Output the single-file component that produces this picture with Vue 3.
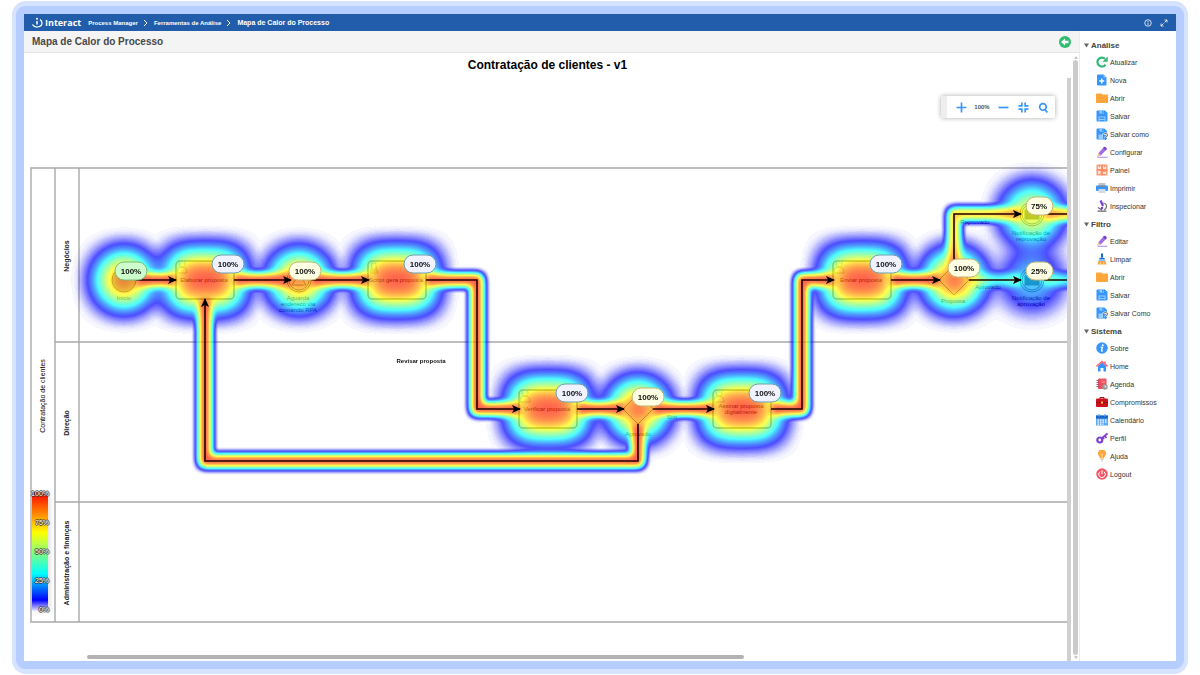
<script setup>
const sections = [
  { title: 'Análise', items: [
    ['refresh', 'Atualizar'], ['new', 'Nova'], ['folder', 'Abrir'], ['save', 'Salvar'],
    ['saveas', 'Salvar como'], ['pencil', 'Configurar'], ['panel', 'Painel'],
    ['print', 'Imprimir'], ['inspect', 'Inspecionar']
  ] },
  { title: 'Filtro', items: [
    ['pencil', 'Editar'], ['brush', 'Limpar'], ['folder', 'Abrir'], ['save', 'Salvar'], ['saveas', 'Salvar Como']
  ] },
  { title: 'Sistema', items: [
    ['info', 'Sobre'], ['home', 'Home'], ['agenda', 'Agenda'], ['case', 'Compromissos'],
    ['calendar', 'Calendário'], ['key', 'Perfil'], ['bulb', 'Ajuda'], ['power', 'Logout']
  ] }
]

const tasks = [
  { x: 205, y: 280, label: ['Elaborar proposta'], icon: 'user' },
  { x: 397, y: 280, label: ['Script gera proposta'], icon: 'script' },
  { x: 548, y: 409, label: ['Verificar proposta'], icon: 'user' },
  { x: 742, y: 409, label: ['Assinar proposta', 'digitalmente'], icon: 'user' },
  { x: 862, y: 280, label: ['Enviar proposta'], icon: 'user' }
]

const gateways = [{ x: 638, y: 409 }, { x: 954, y: 280 }]

const events = [{ x: 299, y: 280 }, { x: 1032, y: 214 }, { x: 1032, y: 280 }]

const links = [
  { d: 'M136 280H176', heat: 1 },
  { d: 'M234 280H291', heat: 1 },
  { d: 'M311 280H369', heat: 1 },
  { d: 'M426 280H477V409H520', heat: 1 },
  { d: 'M577 409H624', heat: 1 },
  { d: 'M653 409H714', heat: 1 },
  { d: 'M771 409H802V280H834', heat: 1 },
  { d: 'M891 280H940', heat: 1 },
  { d: 'M638 424V461H205V299', heat: 1 },
  { d: 'M954 266V214H1021', heat: 0.76 },
  { d: 'M1044 214H1110', heat: 0.76 },
  { d: 'M969 280H1021', heat: 0.3 },
  { d: 'M1044 280H1110', heat: 0.3 }
]

const rounds = [
  { x: 124, y: 280, heat: 0.94 }, { x: 299, y: 280, heat: 0.94 },
  { x: 638, y: 409, heat: 1 }, { x: 954, y: 280, heat: 1 },
  { x: 1032, y: 214, heat: 0.72 }, { x: 1032, y: 280, heat: 0.3 }
]

const captions = [
  { x: 124, y: 300, lines: ['Início'] },
  { x: 298, y: 300, lines: ['Aguarda', 'endereco via', 'comando RPA'] },
  { x: 638, y: 436, lines: ['Aprovado'] },
  { x: 672, y: 419, lines: ['Sim'] },
  { x: 953, y: 303, lines: ['Proposta'] },
  { x: 988, y: 289, lines: ['Aprovado'] },
  { x: 975, y: 224, lines: ['Reprovado'] },
  { x: 1031, y: 235, lines: ['Notificação de', 'reprovação'] },
  { x: 1031, y: 300, lines: ['Notificação de', 'aprovação'] }
]

const badges = [
  { x: 131, y: 271, v: 100, kind: 'start' },
  { x: 228, y: 264, v: 100, kind: 'task' },
  { x: 305, y: 271, v: 100, kind: 'event' },
  { x: 420, y: 264, v: 100, kind: 'task' },
  { x: 572, y: 393, v: 100, kind: 'task' },
  { x: 648, y: 397, v: 100, kind: 'event' },
  { x: 765, y: 393, v: 100, kind: 'task' },
  { x: 886, y: 264, v: 100, kind: 'task' },
  { x: 964, y: 268, v: 100, kind: 'event' },
  { x: 1039, y: 206, v: 75, kind: 'event' },
  { x: 1039, y: 271, v: 25, kind: 'event' }
]
</script>

<template>
  <div class="page">
    <svg class="sprite" aria-hidden="true">
      <symbol id="refresh" viewBox="0 0 24 24"><path d="M19 17.5A9 9 0 1 1 18 5.5" fill="none" stroke="#2fb973" stroke-width="4.4" /><path d="M23.500 1v10.500H13z" fill="#2fb973" /></symbol>
      <symbol id="new" viewBox="0 0 24 24"><path d="M4 1h11l6 6v14a2 2 0 0 1-2 2H4a2 2 0 0 1-2-2V3a2 2 0 0 1 2-2z" fill="#3696fb" /><path d="M15 1v6h6z" fill="#8cc4ff" /><path d="M11.500 9v10M6.500 14h10" stroke="#fff" stroke-width="2.800" /></symbol>
      <symbol id="folder" viewBox="0 0 24 24"><path d="M0 5a2 2 0 0 1 2-2h9l2 2h9a2 2 0 0 1 2 2v13a2 2 0 0 1-2 2H2a2 2 0 0 1-2-2z" fill="#ffa63b" /><path d="M12 7l2-2h9v1H14z" fill="#ffd19a" /></symbol>
      <symbol id="save" viewBox="0 0 24 24"><path d="M1 3a2 2 0 0 1 2-2h15l5 5v15a2 2 0 0 1-2 2H3a2 2 0 0 1-2-2z" fill="#3696fb" /><path d="M7 2h9v5H7zM5 13h14v10H5z" fill="#9accff" /><path d="M12 2h3v4h-3zM7 15h10v3H7zM7 20h10v2H7z" fill="#3696fb" /></symbol>
      <symbol id="saveas" viewBox="0 0 24 24"><path d="M1 3a2 2 0 0 1 2-2h14l5 5v15a2 2 0 0 1-2 2H3a2 2 0 0 1-2-2z" fill="#3696fb" /><path d="M7 2h8v5H7zM5 13h9v10H5z" fill="#9accff" /><path d="M12 2h3v4h-3z" fill="#3696fb" /><path d="M15 14q0-3 4-3t4 3q0 2-2 3t-2 3" fill="none" stroke="#fff" stroke-width="4.500" /><path d="M15 14q0-3 4-3t4 3q0 2-2 3t-2 3M19 21.500v2" fill="none" stroke="#777" stroke-width="2.200" /></symbol>
      <symbol id="pencil" viewBox="0 0 24 24"><path d="M3 21l2-7L15.500 2.500q1.500-1.500 3 0l2 2q1.500 1.500 0 3L9.500 19z" fill="#a36be8" /><path d="M14 4l5 5 2-2q1-1.500 0-3l-2-2q-1.500-1-3 0z" fill="#7c3fd0" /><path d="M3 21l2-7 4.500 5z" fill="#f2c9a0" /><path d="M3 22.500h20" stroke="#b184ee" stroke-width="2" /></symbol>
      <symbol id="panel" viewBox="0 0 24 24"><path d="M1 1h22v22H1z" fill="#ff9a76" /><path d="M4 4h6v6H4zM14 4h6v6h-6zM4 14h5v6H4zM14 16h6v4h-6z" fill="#ffe5dc" /><path d="M7 3v3M17 3v3M12 1v22M1 12h22" stroke="#ff8358" stroke-width="2" /></symbol>
      <symbol id="print" viewBox="0 0 24 24"><path d="M5 2h14v6H5z" fill="#c0c4ca" /><rect x="0" y="7" width="24" height="11" rx="2" fill="#3696fb" /><path d="M5 7h14v3H5z" fill="#7e8b9a" /><path d="M5 14h14v8H5z" fill="#d3dce6" /></symbol>
      <symbol id="inspect" viewBox="0 0 24 24"><path d="M7 2l4-2 5 11-4 2z" fill="#7c3fd0" /><path d="M14 6q8 1 7 8-1 4-5 6" fill="none" stroke="#777" stroke-width="2.500" /><path d="M4 15l8 5M3 22h18" stroke="#666" stroke-width="2.500" /><circle cx="12" cy="16" r="2.500" fill="#7c3fd0" /></symbol>
      <symbol id="brush" viewBox="0 0 24 24"><path d="M10 1h4v8h-4z" fill="#1769d8" /><path d="M6 13q0-4 6-4t6 4z" fill="#1769d8" /><path d="M5 13h14v3H5z" fill="#8cc4ff" /><path d="M5 16h14l2 7H3z" fill="#ffa63b" /><path d="M9 19l-1 4M15 19l1 4" stroke="#fff" stroke-width="1.300" /></symbol>
      <symbol id="info" viewBox="0 0 24 24"><circle cx="12" cy="12" r="11.500" fill="#3696fb" /><circle cx="13.500" cy="6.500" r="1.900" fill="#fff" /><path d="M9 10.500h4l-2 7.500h3" fill="none" stroke="#fff" stroke-width="2.400" /></symbol>
      <symbol id="home" viewBox="0 0 24 24"><path d="M4 12l8-8 8 8v11h-5v-7H9v7H4z" fill="#3696fb" /><path d="M1 13L12 3l11 10M18 3v6" fill="none" stroke="#ff6672" stroke-width="3.200" /></symbol>
      <symbol id="agenda" viewBox="0 0 24 24"><rect x="4" y="1" width="17" height="21" rx="2" fill="#ef4f5f" /><path d="M1 5h6M1 9h6M1 13h6M1 17h6" stroke="#99505a" stroke-width="1.800" /><path d="M11 6h7M11 9h7" stroke="#ff9da5" stroke-width="1.500" /><circle cx="18" cy="18" r="5.500" fill="#999" /><path d="M18 15v3h3" fill="none" stroke="#fff" stroke-width="1.500" /></symbol>
      <symbol id="case" viewBox="0 0 24 24"><path d="M8 6V3h8v3" fill="none" stroke="#8e121b" stroke-width="2" /><rect x="0" y="5" width="24" height="17" rx="2" fill="#cc111d" /><path d="M0 12h24v2H0z" fill="#8e121b" /><path d="M10 11h4v4h-4z" fill="#ffc04a" /></symbol>
      <symbol id="calendar" viewBox="0 0 24 24"><path d="M0 3h24v20H0z" fill="#5aa9fa" /><path d="M0 3h24v6H0z" fill="#1665c4" /><path d="M6 0v5M18 0v5" stroke="#58a7f5" stroke-width="2.500" /><path d="M3 12h18M3 16h18M3 20h12" stroke="#fff" stroke-width="2.500" stroke-dasharray="3 2" /></symbol>
      <symbol id="key" viewBox="0 0 24 24"><circle cx="7.500" cy="16" r="5" fill="none" stroke="#7c3fd0" stroke-width="4.400" /><path d="M11 13L23 3M17 7l4 5M13 10l3 4" stroke="#7c3fd0" stroke-width="3.600" /></symbol>
      <symbol id="bulb" viewBox="0 0 24 24"><path d="M8 17q0-3-2-5a8 8 0 1 1 12 0q-2 2-2 5z" fill="#ffa63b" /><path d="M12 17V9M10 7l2 3 2-3" fill="none" stroke="#ffe2b8" stroke-width="1.500" /><path d="M9 19h6M10 22h4" stroke="#ccc" stroke-width="2" /></symbol>
      <symbol id="power" viewBox="0 0 24 24"><circle cx="12" cy="12" r="11.500" fill="#f65767" /><path d="M8 7.500a6.500 6.500 0 1 0 8 0M12 4.500v8" fill="none" stroke="#fff" stroke-width="2" /></symbol>
    </svg>

    <div class="frame">
      <div class="window">
        <header class="topbar">
          <svg class="logo" viewBox="0 0 22 22" aria-hidden="true">
            <path d="M10 8v7" stroke="#fff" stroke-width="3" /><circle cx="10" cy="3.500" r="2" fill="#fff" />
            <path d="M1 15q4 5.500 10 5 9-1 9-8 0-4-4-7" fill="none" stroke="#fff" stroke-width="2.500" />
          </svg>
          <span class="brand">Interact</span>
          <nav class="crumbs" aria-label="Trilha">
            <a href="#">Process Manager</a>
            <svg viewBox="0 0 4 8" aria-hidden="true"><path d="M0 1l3 3-3 3" /></svg>
            <a href="#">Ferramentas de Análise</a>
            <svg viewBox="0 0 4 8" aria-hidden="true"><path d="M0 1l3 3-3 3" /></svg>
            <a href="#" class="current">Mapa de Calor do Processo</a>
          </nav>
          <button class="top-btn" aria-label="Informações">
            <svg viewBox="0 0 16 16"><circle cx="8" cy="8" r="6.500" /><path d="M8 7v5M8 4v2" /></svg>
          </button>
          <button class="top-btn" aria-label="Tela cheia">
            <svg viewBox="0 0 16 16"><path d="M9 2h5v5M14 2L9 7M7 14H2V9M2 14l5-5" /></svg>
          </button>
        </header>

        <div class="body">
          <main class="main">
            <div class="titlebar">
              <h1>Mapa de Calor do Processo</h1>
              <button aria-label="Voltar">
                <svg viewBox="0 0 24 24"><circle cx="12" cy="12" r="12" fill="#2fbd70" /><path d="M4 12l8-7v4.500h7v5h-7v4.500z" fill="#fff" /></svg>
              </button>
            </div>
            <div class="workspace">
              <section class="stage">
                <h2>Contratação de clientes - v1</h2>
                <div class="scroll-row">
                  <div class="canvas">
                    <svg class="diagram" width="1400" height="583" viewBox="24 78 1400 583" role="img" aria-label="Mapa de calor do processo">
                      <defs>
                        <filter id="soft" filterUnits="userSpaceOnUse" x="24" y="78" width="1200" height="583"><feGaussianBlur stdDeviation="12" /></filter>
                        <filter id="crisp" filterUnits="userSpaceOnUse" x="24" y="78" width="1200" height="583"><feGaussianBlur stdDeviation="3" /></filter>
                        <filter id="heat" filterUnits="userSpaceOnUse" x="24" y="78" width="1200" height="583" color-interpolation-filters="sRGB">
                          <feColorMatrix in="SourceGraphic" type="matrix" values="0 0 0 1 0  0 0 0 1 0  0 0 0 1 0  0 0 0 0 1" result="level" />
                          <feComponentTransfer in="level" result="ramp">
                            <feFuncR type="table" tableValues="0 0 0 0 .33 .67 1 1 1 1" />
                            <feFuncG type="table" tableValues="0 0 .5 1 1 1 1 .67 .36 .08" />
                            <feFuncB type="table" tableValues="1 1 1 1 .67 .33 0 0 0 0" />
                          </feComponentTransfer>
                          <feComponentTransfer in="SourceGraphic" result="cover">
                            <feFuncA type="table" tableValues="0 .38 .64 .84 1 1 1 1 1 1 1 1 1 1 1 1 1 1 1 1 1 1 1 1 1 1 1 1 1 1 1 1 1 1 1 1 1" />
                          </feComponentTransfer>
                          <feComposite in="ramp" in2="cover" operator="in" />
                        </filter>
                        <marker id="tip" viewBox="0 0 9 8" refX="8" refY="4" markerWidth="9" markerHeight="8" markerUnits="userSpaceOnUse" orient="auto"><path d="M0 0l9 4-9 4 2-4z" /></marker>
                      </defs>

                      <g class="lanes">
                        <path d="M1400 168H31V622H1400M55 168V622M79 168V622M55 342H1400M55 502H1400" />
                      </g>
                      <g class="lane-names">
                        <text transform="translate(45 396) rotate(-90)">Contratação de clientes</text>
                        <text class="strong" transform="translate(69 256) rotate(-90)">Negócios</text>
                        <text class="strong" transform="translate(69 423) rotate(-90)">Direção</text>
                        <text class="strong" transform="translate(69 563) rotate(-90)">Administração e finanças</text>
                      </g>

                      <g class="nodes">
                        <g v-for="(t, i) in tasks" :key="i">
                          <rect :x="t.x - 29" :y="t.y - 19" width="58" height="38" rx="4" />
                          <g class="kind" :transform="`translate(${t.x - 23} ${t.y - 12})`">
                            <path v-if="t.icon === 'user'" d="M-5 5q0-6 5-6t5 6zM0-1a3 3 0 1 1 .1 0" />
                            <path v-else d="M-3-5h5v4l2 6h-8l2-6zM-2 1h5M-3 3h6" />
                          </g>
                          <text v-for="(l, j) in t.label" :key="j" :x="t.x - 1" :y="t.y + 2 + j * 6 - (t.label.length - 1) * 3">{{ l }}</text>
                        </g>
                        <path v-for="(g, i) in gateways" :key="'g' + i" :d="`M${g.x - 15} ${g.y}l15-15 15 15-15 15z`" />
                        <circle class="start-node" cx="124" cy="280" r="12" />
                        <g v-for="e in events" :key="e.x + '-' + e.y">
                          <circle :cx="e.x" :cy="e.y" r="12" />
                          <circle :cx="e.x" :cy="e.y" r="10" />
                        </g>
                        <path d="M292 285l7-11 7 11z" />
                        <path d="M1025 210h14v9h-14zl7 5 7-5M1025 276h14v9h-14zl7 5 7-5" class="mail" />
                        <template v-for="(c, i) in captions" :key="'c' + i">
                          <text v-for="(l, j) in c.lines" :key="j" :x="c.x" :y="c.y + j * 6">{{ l }}</text>
                        </template>
                      </g>

                      <g filter="url(#heat)" opacity="0.7">
                        <g filter="url(#soft)">
                          <rect v-for="(t, i) in tasks" :key="i" :x="t.x - 33" :y="t.y - 25" width="66" height="50" rx="8" />
                        </g>
                        <g filter="url(#soft)">
                          <circle v-for="(r, i) in rounds" :key="i" :cx="r.x" :cy="r.y" r="25" :opacity="r.heat" />
                        </g>
                        <g filter="url(#crisp)" class="trail">
                          <path v-for="(l, i) in links" :key="i" :d="l.d" :opacity="l.heat" />
                        </g>
                      </g>

                      <g class="arrows">
                        <path v-for="(l, i) in links" :key="i" :d="l.d" marker-end="url(#tip)" />
                      </g>
                      <text class="free" x="421" y="363">Revisar proposta</text>

                      <g v-for="(b, i) in badges" :key="'b' + i" class="badge" :class="b.kind">
                        <rect :x="b.x - (b.v === 100 ? 16 : 13)" :y="b.y - 9" :width="b.v === 100 ? 32 : 27" height="18" rx="9" />
                        <text :x="b.x" :y="b.y + 3">{{ b.v }}%</text>
                      </g>
                    </svg>

                    <div class="legend">
                      <span>100%</span><span>75%</span><span>50%</span><span>25%</span><span>0%</span>
                    </div>

                    <div class="zoombar">
                      <i class="grip"></i>
                      <button aria-label="Aumentar zoom"><svg viewBox="0 0 20 20"><path d="M10 1v18M1 10h18" /></svg></button>
                      <output>100%</output>
                      <button aria-label="Diminuir zoom"><svg viewBox="0 0 20 20"><path d="M1 10h18" /></svg></button>
                      <button aria-label="Ajustar"><svg viewBox="0 0 20 20"><path d="M7 1v6H1M13 1v6h6M7 19v-6H1M13 19v-6h6" /></svg></button>
                      <button aria-label="Pesquisar"><svg viewBox="0 0 20 20"><circle cx="9" cy="9" r="6" /><path d="M12 13l5 6" /></svg></button>
                    </div>
                    <div class="hscroll"></div>
                  </div>
                  <div class="vscroll-inner"></div>
                </div>
              </section>
              <div class="vscroll">
                <svg viewBox="0 0 6 4"><path d="M3 0l3 4H0z" /></svg>
                <i></i>
                <svg viewBox="0 0 6 4"><path d="M3 4L0 0h6z" /></svg>
              </div>
            </div>
          </main>

          <aside class="side">
            <section v-for="s in sections" :key="s.title">
              <h3><svg viewBox="0 0 6 5" aria-hidden="true"><path d="M0 0h6L3 5z" /></svg>{{ s.title }}</h3>
              <ul>
                <li v-for="[icon, label] in s.items" :key="label">
                  <a href="#"><svg aria-hidden="true"><use :href="'#' + icon" /></svg>{{ label }}</a>
                </li>
              </ul>
            </section>
          </aside>
        </div>
      </div>
    </div>
  </div>
</template>

<style>
body { margin: 0; background: #fff; }
</style>

<style scoped>
.page { height: 100vh; box-sizing: border-box; padding: 1px 12px; font-family: "Liberation Sans", Arial, sans-serif; color: #333; }
.sprite { position: absolute; width: 0; height: 0; }
.frame { height: 100%; box-sizing: border-box; padding: 5px 4px; border-radius: 14px; background: #d6e3ff; }
.window { height: 100%; box-sizing: border-box; border: 8px solid #b5cdff; border-radius: 9px; background: #fff; display: flex; flex-direction: column; }
button { border: 0; padding: 0; background: none; display: flex; cursor: pointer; }
a { color: inherit; text-decoration: none; }
h1, h2, h3, ul { margin: 0; padding: 0; }
ul { list-style: none; }

.topbar { flex: none; height: 17px; background: #215dab; color: #fff; display: flex; align-items: center; padding: 0 8px; }
.logo { width: 11px; height: 11px; margin-right: 2px; }
.brand { font: bold 9px "Open Sans", sans-serif; }
.crumbs { flex: 1; display: flex; align-items: center; gap: 6px; margin-left: 7px; font-size: 6px; font-weight: bold; white-space: nowrap; }
.crumbs svg { width: 4px; height: 8px; fill: none; stroke: #fff; }
.crumbs .current { font-size: 7px; }
.top-btn { margin-left: 8px; }
.top-btn svg { width: 8px; height: 8px; fill: none; stroke: #fff; stroke-width: 1.6; }

.body { flex: 1; min-height: 0; display: flex; }
.main { flex: 1; min-width: 0; display: flex; flex-direction: column; }
.titlebar { flex: none; height: 22px; box-sizing: border-box; border-bottom: 1px solid #e4e4e4; background: #f4f4f4; display: flex; align-items: center; justify-content: space-between; padding: 0 8px; }
.titlebar h1 { font-size: 10px; line-height: 12px; color: #484848; }
.titlebar svg { width: 12px; height: 12px; }
.workspace { flex: 1; min-height: 0; display: flex; }
.stage { flex: 1; min-width: 0; display: flex; flex-direction: column; }
.stage h2 { flex: none; font-size: 12px; line-height: 25px; text-align: center; color: #000; }
.scroll-row { flex: 1; min-height: 0; display: flex; }
.canvas { flex: 1; min-width: 0; position: relative; overflow: hidden; }
.diagram { display: block; }
.vscroll-inner { width: 4px; background: #d0d0d0; }
.vscroll { width: 7px; margin-left: 1px; display: flex; flex-direction: column; align-items: center; gap: 1px; padding: 3px 0 2px; box-sizing: border-box; }
.vscroll svg { width: 4px; height: 3px; fill: #bbb; }
.vscroll i { flex: 1; width: 5px; border-radius: 3px; background: #cbcbcb; }

.lanes path { fill: none; stroke: #a9a9a9; stroke-width: 1.4; }
.lane-names text { font-size: 7px; text-anchor: middle; fill: #000; }
.lane-names .strong { font-weight: bold; fill: #222; }
.nodes rect, .nodes circle, .nodes path { fill: none; stroke: #555; stroke-width: 1; }
.nodes rect { stroke-width: 1.4; }
.nodes .kind path { stroke: #999; }
.nodes .start-node { fill: #bbb; }
.nodes .mail { fill: #555; }
.nodes text { font-size: 6px; text-anchor: middle; fill: #000; }
.trail path { fill: none; stroke: #000; stroke-width: 12; stroke-linejoin: round; }
.arrows path { fill: none; stroke: #200; stroke-width: 1.6; }
marker path { fill: #000; }
.free { font-size: 6px; font-weight: bold; text-anchor: middle; fill: #111; }
.badge text { font-size: 8px; font-weight: bold; text-anchor: middle; fill: #111; }
.badge.start rect { fill: #ccffcc; stroke: #79b879; }
.badge.task rect { fill: #f0f2ff; stroke: #6a9fb5; }
.badge.event rect { fill: #ffffe3; stroke: #c4b473; }

.legend { position: absolute; left: 8px; bottom: 49px; width: 16px; height: 120px; border-radius: 3px; background: linear-gradient(to top, #fff, #00f 10%, #0ff 32%, #ff0 66%, #f00); box-shadow: 2px 0 5px #0002; display: flex; flex-direction: column; justify-content: space-between; font-size: 7px; line-height: 4px; text-align: right; color: #fff; text-shadow: 1px 0 #333, -1px 0 #333, 0 1px #333, 0 -1px #333; }
.legend span { margin-left: -4px; margin-right: -1px; }
.zoombar { position: absolute; top: 18px; right: 12px; height: 22px; display: flex; align-items: center; gap: 8px; padding-right: 6px; background: #fff; border-radius: 2px; box-shadow: 0 0 5px #0005; }
.grip { width: 6px; height: 100%; background: #eee; }
.zoombar svg { width: 11px; height: 11px; fill: none; stroke: #3696fb; stroke-width: 3; }
.zoombar output { display: flex; justify-content: center; font-size: 6px; font-weight: bold; color: #555; width: 14px; }
.zoombar button { width: 12px; justify-content: center; }
.hscroll { position: absolute; bottom: 2px; left: 6%; width: 63%; height: 4px; border-radius: 2px; background: #b3b3b3; }

.side { flex: none; width: 97px; box-sizing: border-box; border-left: 1px solid #ececec; padding: 7px 0 0 4px; }
.side section { margin-bottom: 2px; }
.side h3 { display: flex; align-items: center; gap: 2px; height: 15px; font-size: 8px; color: #444; }
.side h3 svg { width: 5px; height: 5px; fill: #666; }
.side a { display: flex; align-items: center; gap: 2px; height: 18px; padding-left: 12px; font-size: 7px; color: #333; white-space: nowrap; }
.side a svg { width: 12px; height: 12px; flex: none; }
</style>
